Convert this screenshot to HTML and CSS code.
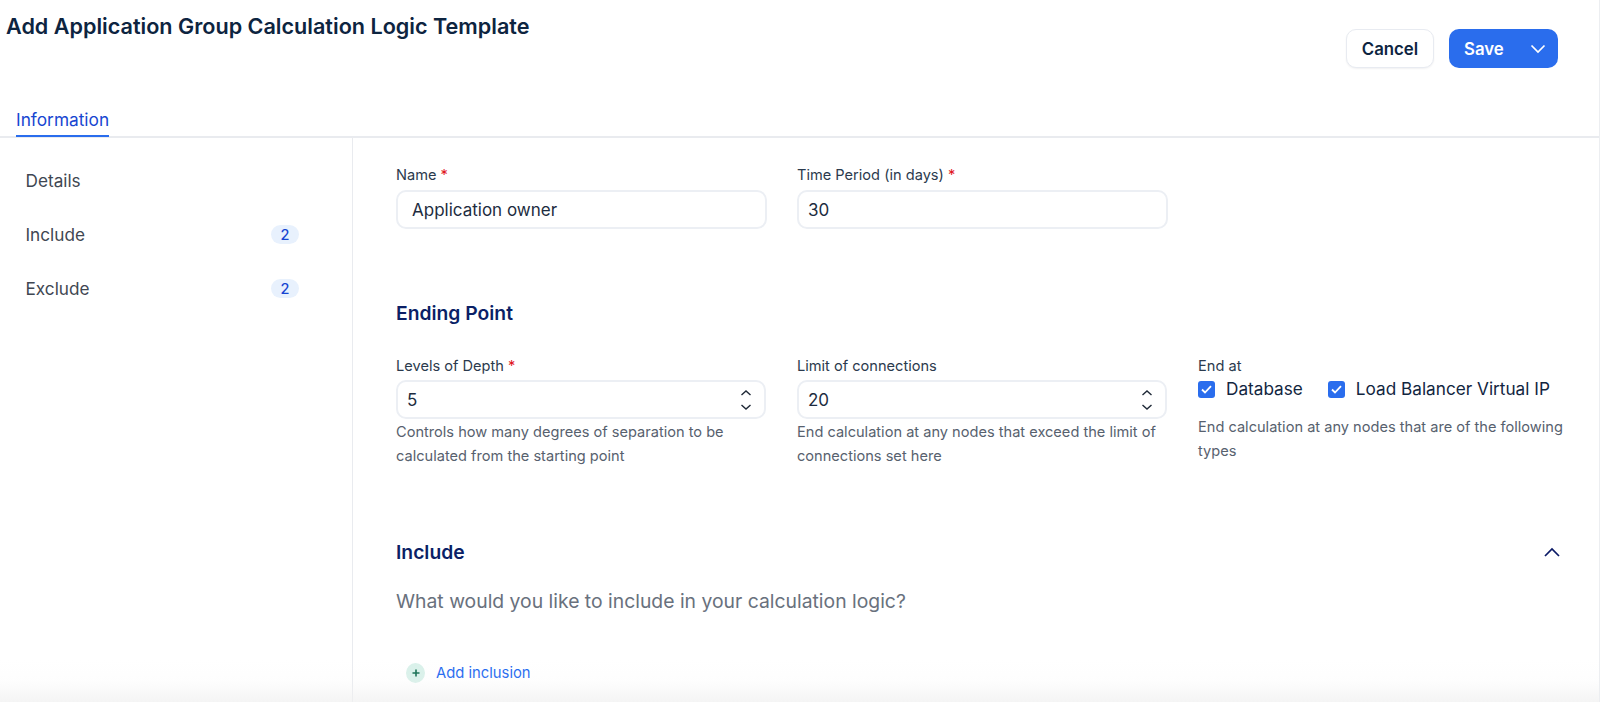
FILE: index.html
```html
<!DOCTYPE html>
<html lang="en">
<head>
<meta charset="utf-8">
<title>Add Application Group Calculation Logic Template</title>
<link rel="stylesheet" href="styles.css">
</head>
<body>
<div class="page">
  <header class="header">
    <h1 class="title">Add Application Group Calculation Logic Template</h1>
    <div class="actions">
      <button class="btn btn-cancel" type="button">Cancel</button>
      <div class="btn btn-save">
        <span>Save</span>
        <svg class="save-chev" width="16" height="10" viewBox="0 0 16 10"><path d="M1.5 1.5 8 8l6.5-6.5" fill="none" stroke="#fff" stroke-width="1.7"/></svg>
      </div>
    </div>
  </header>
  <nav class="tabs"><span class="tab">Information</span></nav>
  <div class="body">
    <aside class="side">
      <div class="side-row">Details</div>
      <div class="side-row">Include<span class="badge">2</span></div>
      <div class="side-row">Exclude<span class="badge">2</span></div>
    </aside>
    <main class="main">
      <div class="grid grid-top">
        <div>
          <div class="label">Name <span class="req">*</span></div>
          <div class="input input-wide">Application owner</div>
        </div>
        <div>
          <div class="label">Time Period (in days) <span class="req">*</span></div>
          <div class="input">30</div>
        </div>
      </div>
      <h2 class="section section-end">Ending Point</h2>
      <div class="grid grid-end">
        <div>
          <div class="label">Levels of Depth <span class="req">*</span></div>
          <div class="input input-num">5
            <svg class="stepper" width="12" height="20" viewBox="0 0 12 20"><path d="M1.5 5 6 1l4.500 4M1.500 15 6 19l4.500-4" fill="none" stroke="#1f2937" stroke-width="1.4"/></svg>
          </div>
          <p class="help">Controls how many degrees of separation to be calculated from the starting point</p>
        </div>
        <div>
          <div class="label">Limit of connections</div>
          <div class="input input-num">20
            <svg class="stepper" width="12" height="20" viewBox="0 0 12 20"><path d="M1.500 5 6 1l4.500 4M1.500 15 6 19l4.500-4" fill="none" stroke="#1f2937" stroke-width="1.4"/></svg>
          </div>
          <p class="help">End calculation at any nodes that exceed the limit of connections set here</p>
        </div>
        <div>
          <div class="label">End at</div>
          <div class="checks">
            <span class="check"><span class="box"><svg width="11" height="9" viewBox="0 0 11 9"><path d="M1 4.500 4 7.500 10 1.200" fill="none" stroke="#fff" stroke-width="1.800"/></svg></span>Database</span>
            <span class="check"><span class="box"><svg width="11" height="9" viewBox="0 0 11 9"><path d="M1 4.500 4 7.500 10 1.200" fill="none" stroke="#fff" stroke-width="1.800"/></svg></span>Load Balancer Virtual IP</span>
          </div>
          <p class="help help-end">End calculation at any nodes that are of the following types</p>
        </div>
      </div>
      <div class="include-head">
        <h2 class="section">Include</h2>
        <svg width="16" height="10" viewBox="0 0 16 10"><path d="M1 9 8 2l7 7" fill="none" stroke="#0b1a66" stroke-width="1.700"/></svg>
      </div>
      <p class="question">What would you like to include in your calculation logic?</p>
      <div class="add">
        <span class="add-icon"><svg width="8" height="8" viewBox="0 0 8 8"><path d="M4 .5v7M.5 4h7" stroke="#0f6b4f" stroke-width="1.600"/></svg></span>
        <span class="add-text">Add inclusion</span>
      </div>
    </main>
  </div>
  <div class="fade"></div>
</div>
</body>
</html>
```
FILE: styles.css
```css
* { box-sizing: border-box; }
html, body { margin: 0; padding: 0; background: #fff; }
body { font-family: Inter, "Liberation Sans", sans-serif; color: #0f2540; }
.page { position: relative; width: 1600px; height: 702px; overflow: hidden; display: flex; flex-direction: column; border-right: 1px solid #eceef1; }
.header { display: flex; justify-content: space-between; align-items: flex-start; height: 106px; padding-left: 6px; padding-right: 41px; }
.title { margin: 12px 0 0; font-size: 21.600px; line-height: 28px; font-weight: 600; color: #0d2440; }
.actions { display: flex; gap: 15px; margin-top: 29px; }
.btn { height: 39px; border-radius: 10px; font-family: inherit; font-size: 16.800px; font-weight: 600; display: flex; align-items: center; }
.btn-cancel { width: 88px; justify-content: center; background: #fff; border: 1px solid #e8ebf1; color: #0d2440; box-shadow: 0 1px 2px rgba(16, 24, 40, .06); padding: 0; }
.btn-save { width: 109px; background: #2a6ded; color: #fff; padding: 0 12px 0 15px; justify-content: space-between; }
.save-chev { display: block; }
.tabs { height: 32px; padding-left: 16px; border-bottom: 2px solid #e9ebef; }
.tab { display: block; width: 93px; height: 31px; font-size: 17.300px; line-height: 28px; color: #1746d1; border-bottom: 2px solid #2a6ded; white-space: nowrap; }
.body { flex: 1; display: flex; min-height: 0; }
.side { width: 353px; flex: none; border-right: 1px solid #e9ebef; padding: 15px 53px 0 25.500px; }
.side-row { height: 54px; display: flex; align-items: center; justify-content: space-between; font-size: 17.200px; color: #3f4752; }
.badge { width: 28px; height: 19px; border-radius: 10px; background: #e8f1fd; color: #1746d1; font-size: 14.500px; font-weight: 500; display: flex; align-items: center; justify-content: center; }
.main { flex: 1; padding: 27px 0 0 43px; }
.grid { display: grid; grid-template-columns: 371px 371px 1fr; column-gap: 30px; }
.label { font-size: 14.600px; line-height: 20px; color: #2b3a4d; margin-bottom: 4px; }
.grid-top .label { margin-bottom: 5px; }
.req { color: #e0161f; }
.input { height: 39px; border: 2px solid #eceff4; border-radius: 10px; display: flex; align-items: center; padding: 0 9px; font-size: 17px; color: #1d2c40; position: relative; }
.input-wide { padding-left: 14px; }
.input-num { justify-content: space-between; width: 370px; padding-right: 12px; }
.stepper { display: block; }
.help { margin: 1px 0 0; font-size: 14.600px; line-height: 24px; color: #57616e; }
.help-end { margin-top: 14px; }
.section { margin: 0; font-size: 19.300px; line-height: 26px; font-weight: 600; color: #0b1f66; }
.section-end { margin-top: 71px; }
.grid-end { margin-top: 30px; }
.checks { display: flex; gap: 25px; margin-top: -3px; }
.check { display: flex; align-items: center; gap: 11px; font-size: 17.200px; line-height: 24px; color: #12263f; }
.box { width: 17px; height: 17px; border-radius: 3px; background: #2a6ded; display: flex; align-items: center; justify-content: center; }
.include-head { display: flex; justify-content: space-between; align-items: center; margin-top: 71px; padding-right: 39px; }
.question { margin: 22px 0 0; font-size: 19.350px; line-height: 28px; color: #69717d; }
.add { display: flex; align-items: center; gap: 11px; margin: 48px 0 0 10px; }
.add-icon { width: 19px; height: 20px; border-radius: 50%; background: #d9f1ea; display: flex; align-items: center; justify-content: center; }
.add-text { font-size: 14.800px; line-height: 20px; color: #1a66f0; }
.fade { position: absolute; left: 0; right: 0; bottom: 0; height: 42px; background: linear-gradient(to bottom, rgba(240, 240, 240, 0), rgba(240, 240, 240, .1) 50%, rgba(240, 240, 240, .7)); pointer-events: none; }
```
